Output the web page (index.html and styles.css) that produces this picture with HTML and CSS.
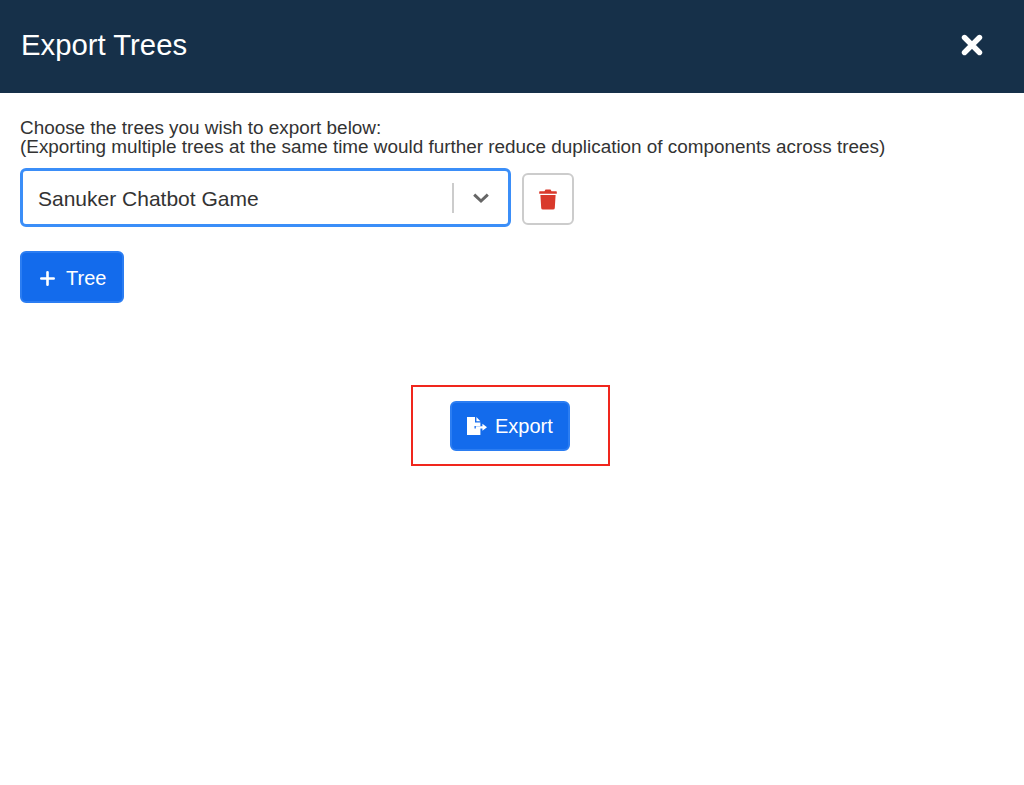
FILE: index.html
```html
<!DOCTYPE html>
<html>
<head>
	<title>Export Trees</title>
	<link rel="stylesheet" href="styles.css">
	<meta charset="utf-8">
</head>
<body>
	<div class="modal__header">
		<p class="modal__title">Export Trees</p>
		<button class="close__button" aria-label="Close">
			<svg width="22" height="22" viewBox="0 0 22 22"><path d="M3.5 3.5 L18.5 18.5 M18.5 3.5 L3.5 18.5" stroke="#fff" stroke-width="5.4" stroke-linecap="round"/></svg>
		</button>
	</div>

	<div class="modal__body">
		<p class="intro">Choose the trees you wish to export below:<br>(Exporting multiple trees at the same time would further reduce duplication of components across trees)</p>

		<div class="tree__row">
			<div class="tree__select">
				<span class="tree__value">Sanuker Chatbot Game</span>
				<span class="tree__divider"></span>
				<svg class="tree__chevron" width="18" height="12" viewBox="0 0 18 12"><path d="M2.2 2.6 L9 9 L15.8 2.6" fill="none" stroke="#666" stroke-width="3"/></svg>
			</div>
			<button class="delete__button" aria-label="Delete">
				<svg width="18" height="21" viewBox="0 0 18 21"><path fill="#d9392b" d="M6.5 0.5 H11.5 L12.5 2.3 H17.2 Q17.8 2.3 17.8 3 V4.8 H0.2 V3 Q0.2 2.3 0.8 2.3 H5.5 Z M1.4 6 H16.6 L15.8 19 Q15.7 20.6 14 20.6 H4 Q2.3 20.6 2.2 19 Z"/></svg>
			</button>
		</div>

		<button class="action__button add__button">
			<svg width="15" height="15" viewBox="0 0 15 15"><path d="M7.5 1.3 V13.7 M1.3 7.5 H13.7" stroke="#fff" stroke-width="2.6" stroke-linecap="round"/></svg>
			Tree
		</button>

		<div class="export__area">
			<div class="export__highlight">
				<button class="action__button export__button">
					<svg width="20" height="18" viewBox="0 0 20 18"><path fill="#fff" d="M0 0 H8 V5.6 H13.4 V9 H7.5 V11.6 H13.4 V18 H0 Z M9.4 0 L13.4 4.2 H9.4 Z M8.8 9.2 H15.4 V6.8 L20 10.3 L15.4 13.8 V11.4 H8.8 Z"/></svg>
					Export
				</button>
			</div>
		</div>
	</div>
</body>
</html>
```

FILE: styles.css
```css
* {
	box-sizing: border-box;
	margin: 0;
	padding: 0;
}

body {
	font-family: "Liberation Sans", Arial, sans-serif;
	color: #333;
	background: #fff;
	min-height: 100vh;
}

button {
	font-family: inherit;
	cursor: pointer;
}

.modal__header {
	height: 93px;
	background: #163049;
	display: flex;
	align-items: center;
	justify-content: space-between;
	padding: 0 41px 3px 21px;
}

.modal__title {
	color: #fff;
	font-size: 29.3px;
}

.close__button {
	display: flex;
	background: none;
	border: none;
}

.modal__body {
	padding: 25px 20px 0;
}

.intro {
	font-size: 18.9px;
	line-height: 19px;
	color: #333;
}

.tree__row {
	display: flex;
	align-items: flex-start;
	gap: 11px;
	margin-top: 12px;
}

.tree__select {
	width: 491px;
	height: 59px;
	border: 3px solid #3b8ef8;
	border-radius: 6px;
	display: flex;
	align-items: center;
	padding: 3px 0 0 15px;
	font-size: 21px;
}

.tree__value {
	flex: 1;
}

.tree__divider {
	width: 2px;
	height: 30px;
	margin-top: -3px;
	background: #ccc;
}

.tree__chevron {
	margin: -3px 18px 0;
}

.delete__button {
	width: 52px;
	height: 52px;
	margin-top: 5px;
	background: #fff;
	border: 2px solid #ccc;
	border-radius: 6px;
	display: flex;
	align-items: center;
	justify-content: center;
}

.action__button {
	display: flex;
	align-items: center;
	background: #136bec;
	border: 2px solid #2b7df2;
	border-radius: 6px;
	color: #fff;
	font-size: 20px;
	padding-top: 1px;
}

.add__button {
	width: 104px;
	height: 52px;
	margin-top: 24px;
	padding: 2px 0 0 18px;
	gap: 11px;
}

.export__area {
	display: flex;
	justify-content: center;
	margin-top: 82px;
	padding-right: 4px;
}

.export__highlight {
	width: 199px;
	height: 81px;
	border: 2px solid #f0261d;
	display: flex;
	align-items: center;
	justify-content: center;
}

.export__button {
	width: 120px;
	height: 50px;
	padding-left: 15px;
	gap: 8px;
}
```
